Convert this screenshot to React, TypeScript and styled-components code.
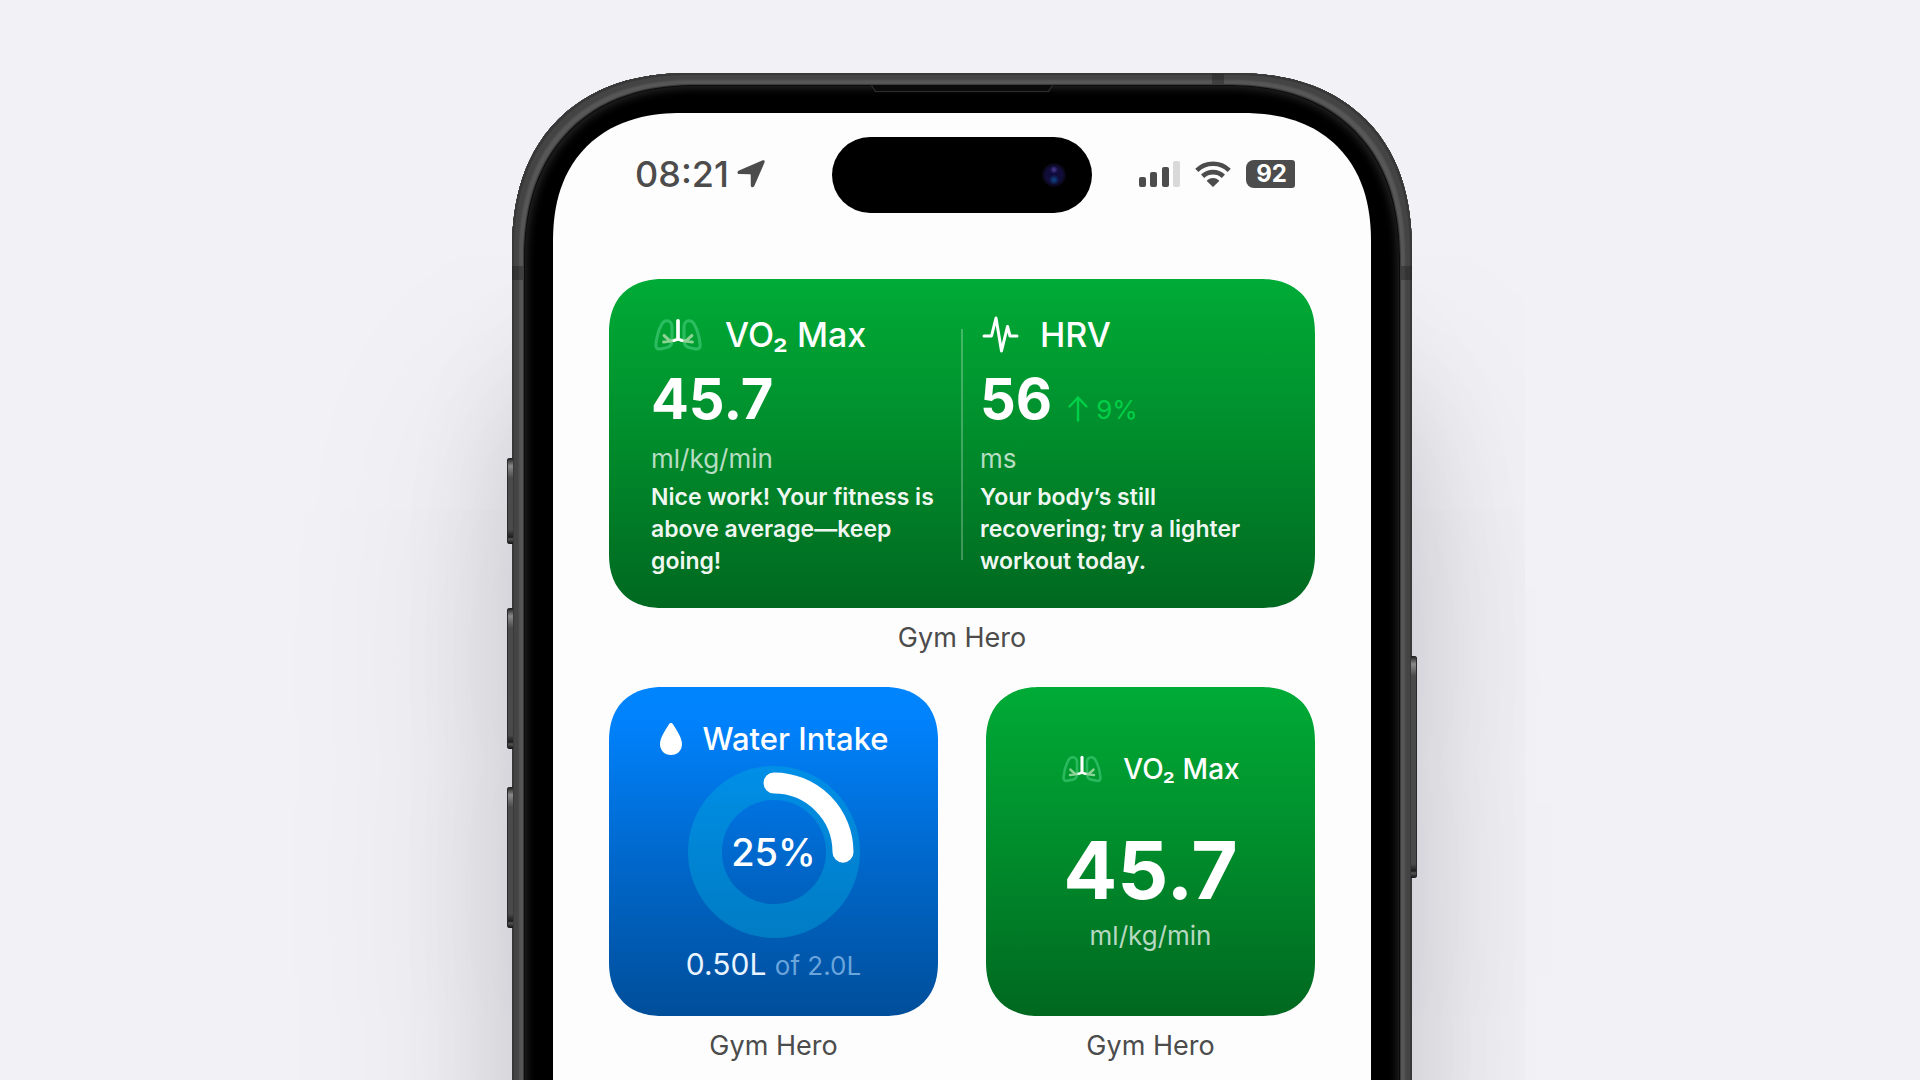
import React from "react";
import styled, { createGlobalStyle } from "styled-components";

const GlobalStyle = createGlobalStyle`
  * { box-sizing: border-box; }
  body {
    margin: 0;
    background: #f2f1f6;
    font-family: Inter, "Liberation Sans", sans-serif;
    -webkit-font-smoothing: antialiased;
  }
  h2, p, figure { margin: 0; }
`;

const Page = styled.main`
  height: 100vh;
  overflow: hidden;
  display: flex;
  justify-content: center;
  align-items: flex-start;
  padding: 73px 16px 0 20px;
`;

const Phone = styled.div`
  position: relative;
  width: 100%;
  max-width: 900px;
  padding: 40px 41px 0;
  border-radius: 178px 178px 0 0;
  corner-shape: superellipse(1.2);
  background: #000;
  box-shadow:
    inset 0 0 0 2px #383838,
    inset 0 0 2px 7px #444,
    inset 0 0 1px 11px #585858,
    inset 0 0 0 12px #3a3a3a,
    inset 0 0 0 13px #0c0c0c,
    inset 0 0 8px 15px #262626,
    0 290px 240px rgba(10, 8, 20, 0.14),
    0 250px 120px -10px rgba(10, 8, 20, 0.16);
`;

const Speaker = styled.span`
  position: absolute;
  top: 12px;
  left: 50%;
  width: 182px;
  height: 7px;
  transform: translateX(-50%);
  background: #2e2e2e;
  clip-path: polygon(0 0, 100% 0, calc(100% - 4px) 100%, 4px 100%);

  &::after {
    content: "";
    display: block;
    height: 6px;
    background: #0a0a0a;
    clip-path: polygon(1px 0, calc(100% - 1px) 0, calc(100% - 5px) 100%, 5px 100%);
  }
`;

const SideKey = styled.span<{ $side: "left" | "right"; $top: number; $length: number }>`
  position: absolute;
  top: ${(p) => p.$top}px;
  ${(p) => p.$side}: -5px;
  width: 6px;
  height: ${(p) => p.$length}px;
  border-radius: ${(p) => (p.$side === "left" ? "3px 0 0 3px" : "0 3px 3px 0")};
  background: linear-gradient(#1c1c1c, #8a8a8a 8px, #4a4a4a 20px, #4a4a4a calc(100% - 14px), #1c1c1c calc(100% - 7px), #555 calc(100% - 5px), #111);
  box-shadow: inset ${(p) => (p.$side === "left" ? "1px" : "-1px")} 0 0 #2a2a2a;
`;

const Antenna = styled.span<{ $edge: "left" | "right" | "top" }>`
  position: absolute;
  background: rgba(30, 30, 30, 0.4);
  ${(p) =>
    p.$edge === "top"
      ? "top: 1px; right: 188px; width: 12px; height: 10px;"
      : `top: 193px; ${p.$edge}: 0; width: 11px; height: 14px;`}
`;

const Screen = styled.div`
  border-radius: 129px 129px 0 0;
  corner-shape: superellipse(1.2);
  background: #fdfdfd;
  padding-bottom: 640px;
`;

const StatusBar = styled.header`
  display: grid;
  grid-template-columns: 1fr 260px 1fr;
  align-items: center;
  padding: 24px 76px 66px;
  color: #4c4c4c;
`;

const Clock = styled.div`
  display: flex;
  align-items: center;
  gap: 8px;
  padding: 0 0 2px 6px;
  font-size: 36px;
  line-height: 40px;
  font-weight: 500;
`;

const Island = styled.div`
  display: flex;
  align-items: center;
  justify-content: flex-end;
  height: 76px;
  padding-right: 26px;
  border-radius: 38px;
  background: #000;
`;

const Lens = styled.span`
  width: 24px;
  height: 24px;
  border-radius: 50%;
  background:
    radial-gradient(circle at 50% 28%, #4a3d94 0, transparent 4px),
    radial-gradient(circle at 50% 70%, #0b4a86 0, transparent 5px),
    radial-gradient(circle, #0d0a3c 0, #120d3a 8px, #07060f 12px);
`;

const Signals = styled.div`
  display: flex;
  align-items: center;
  justify-content: flex-end;
  gap: 15px;
  padding-bottom: 2px;
`;

const Battery = styled.span`
  width: 49px;
  padding-left: 2px;
  border-radius: 8px 3px 3px 8px;
  background: #4c4c4c;
  color: #fff;
  font-size: 24px;
  line-height: 28px;
  font-weight: 700;
  text-align: center;
`;

const Widgets = styled.div`
  display: grid;
  grid-template-columns: 1fr 1fr;
  gap: 33px 48px;
  padding: 0 56px;
`;

const Widget = styled.figure<{ $wide?: boolean }>`
  grid-column: ${(p) => (p.$wide ? "1 / -1" : "auto")};
  display: flex;
  flex-direction: column;
  gap: 14px;
`;

const WidgetName = styled.figcaption`
  color: #4c4c4c;
  font-size: 27px;
  line-height: 32px;
  text-align: center;
`;

const Card = styled.section<{ $tone: "green" | "blue" }>`
  display: flex;
  height: 329px;
  border-radius: 54px;
  corner-shape: superellipse(1.2);
  color: #fff;
  background: ${(p) =>
    p.$tone === "green"
      ? "linear-gradient(#00ab36, #008a2b 52%, #006820)"
      : "linear-gradient(#0085ff, #0082fc 10%, #0068cc 52%, #004e9a)"};
`;

const SplitCard = styled(Card)`
  display: grid;
  grid-template-columns: minmax(0, 1fr) 2px minmax(0, 1fr);
  padding: 32px 42px;
`;

const StackCard = styled(Card)`
  flex-direction: column;
  align-items: center;
`;

const Divider = styled.span`
  margin: 18px 0 17px;
  background: rgba(255, 255, 255, 0.25);
`;

const Metric = styled.div<{ $inset?: boolean }>`
  display: flex;
  flex-direction: column;
  padding-left: ${(p) => (p.$inset ? 17 : 0)}px;
`;

const Title = styled.h2<{ $size: number }>`
  display: flex;
  align-items: center;
  gap: 20px;
  font-size: ${(p) => p.$size}px;
  line-height: 48px;
  font-weight: 500;
  white-space: nowrap;
`;

const IconSlot = styled.span<{ $width: number }>`
  display: flex;
  justify-content: center;
  width: ${(p) => p.$width}px;
`;

const ValueRow = styled.div`
  display: flex;
  align-items: baseline;
  gap: 16px;
  margin: 12px 0 16px;
`;

const Value = styled.strong<{ $size: number }>`
  font-size: ${(p) => p.$size}px;
  line-height: 56px;
  font-weight: 700;
`;

const Trend = styled.span`
  color: #00cf48;
  font-size: 26px;
  line-height: 32px;

  svg {
    margin-right: 8px;
    vertical-align: -3px;
  }
`;

const Unit = styled.p`
  color: rgba(255, 255, 255, 0.72);
  font-size: 26px;
  line-height: 32px;
`;

const Advice = styled.p`
  padding-top: 6px;
  color: rgba(255, 255, 255, 0.95);
  font-size: 23px;
  line-height: 32px;
  font-weight: 600;
`;

const WaterCard = styled(StackCard)`
  padding-top: 28px;
`;

const VoCard = styled(StackCard)`
  padding-top: 58px;
`;

const BigValue = styled(Value)`
  margin-top: 45px;
  line-height: 64px;
`;

const SmallUnit = styled(Unit)`
  margin-top: 18px;
`;

const Gauge = styled.div`
  display: grid;
  place-items: center;
  margin-top: 3px;

  > * { grid-area: 1 / 1; }
`;

const Percent = styled.span`
  font-size: 38px;
  line-height: 48px;
  font-weight: 500;
`;

const Intake = styled.p`
  margin-top: 4px;
  font-size: 30px;
  line-height: 44px;
  color: #e8f4ff;
  white-space: nowrap;
`;

const Goal = styled.span`
  font-size: 26px;
  color: rgba(180, 220, 255, 0.6);
`;

function LungsIcon({ width }: { width: number }) {
  return (
    <svg width={width} height={(width * 36) / 52} viewBox="0 0 52 36" fill="none" strokeLinecap="round" strokeLinejoin="round" aria-hidden>
      <g stroke="#6be5a4" strokeOpacity=".4" strokeWidth="3.400">
        <path d="M14 3C17.500 3 19.500 6 19.500 10V25C19.500 29 18 31 14 32L7 33.500C3 34 1.800 32 2 29C2.800 21 5.500 12 8 7.500C9.500 4.500 11 3 14 3Z" />
        <path d="M38 3C34.500 3 32.500 6 32.500 10V25C32.500 29 34 31 38 32L45 33.500C49 34 50.200 32 50 29C49.200 21 46.500 12 44 7.500C42.500 4.500 41 3 38 3Z" />
      </g>
      <g stroke="#a3dca6" strokeOpacity=".85" strokeWidth="3.400">
        <path d="M24 23.500L18 25L10.500 26M17.500 25L11 19" />
        <path d="M28 23.500L34 25L41.500 26M34.500 25L41 19" />
      </g>
      <path d="M26 3V23" stroke="#fff" strokeWidth="4" />
      <path d="M21.500 24.600L26 22.700L30.500 24.600" stroke="#fff" strokeWidth="2.800" />
    </svg>
  );
}

function PulseIcon() {
  return (
    <svg width="38" height="40" viewBox="0 0 38 40" fill="none" stroke="#fff" strokeWidth="3" strokeLinecap="round" strokeLinejoin="round" aria-hidden>
      <path d="M3 21H10.500L15 3L20.500 36L26.500 11.500L29 21H36" />
    </svg>
  );
}

function DropIcon() {
  return (
    <svg width="22" height="32" viewBox="0 0 22 32" fill="#fff" aria-hidden>
      <path d="M11 0C12 0 12.700 .7 13.300 1.700C16.500 7 22 14.500 22 21C22 27.500 17.500 32 11 32S0 27.500 0 21C0 14.500 5.500 7 8.700 1.700C9.300 .7 10 0 11 0Z" />
    </svg>
  );
}

function LocationIcon() {
  return (
    <svg width="28" height="28" viewBox="0 0 28 28" fill="currentColor" aria-hidden>
      <path d="M25.200 .5C27.200 -.3 28.200 .9 27.400 2.800L17.400 25.800C16.400 28 13.800 27.600 13.800 25.200L13.700 14.800C13.700 14.400 13.500 14.200 13.100 14.200L2.600 14.100C.1 14.100-.3 11.500 2 10.500Z" />
    </svg>
  );
}

function CellularIcon() {
  return (
    <svg width="41" height="26" viewBox="0 0 41 26" fill="currentColor" aria-hidden>
      <rect y="16" width="7" height="10" rx="2" />
      <rect x="11" y="11" width="7" height="15" rx="2" />
      <rect x="23" y="6" width="7" height="20" rx="2" />
      <rect x="34" width="7" height="26" rx="2" opacity=".2" />
    </svg>
  );
}

function WifiIcon() {
  return (
    <svg width="36" height="26" viewBox="0 0 36 26" aria-hidden>
      <g fill="none" stroke="currentColor" strokeWidth="4.600">
        <path d="M1.800 9.300A23.500 23.500 0 0 1 34.200 9.300" />
        <path d="M7.600 15.200A15.200 15.200 0 0 1 28.400 15.200" />
      </g>
      <path d="M18 26L12 20.200Q11.600 19.700 12.200 19.200A9 9 0 0 1 23.800 19.200Q24.400 19.700 24 20.200Z" fill="currentColor" />
    </svg>
  );
}

function ArrowUpIcon() {
  return (
    <svg width="20" height="26" viewBox="0 0 20 26" fill="none" stroke="currentColor" strokeWidth="2.400" strokeLinecap="round" strokeLinejoin="round" aria-hidden>
      <path d="M10 24.500V1.500M1.500 10.500L10 1.500L18.500 10.500" />
    </svg>
  );
}

function Ring({ share }: { share: number }) {
  const radius = 69;
  const length = 2 * Math.PI * radius;
  return (
    <svg width="172" height="172" viewBox="0 0 172 172" fill="none" aria-hidden>
      <circle cx="86" cy="86" r={radius} stroke="#00b4e0" strokeOpacity=".38" strokeWidth="34" />
      <circle
        cx="86"
        cy="86"
        r={radius}
        stroke="#fff"
        strokeWidth="21"
        strokeLinecap="round"
        strokeDasharray={`${length * share} ${length}`}
        transform="rotate(-90 86 86)"
      />
    </svg>
  );
}

export default function App() {
  return (
    <>
      <GlobalStyle />
      <Page>
        <Phone>
          <SideKey $side="left" $top={385} $length={86} />
          <SideKey $side="left" $top={535} $length={141} />
          <SideKey $side="left" $top={714} $length={141} />
          <SideKey $side="right" $top={583} $length={222} />
          <Antenna $edge="left" />
          <Antenna $edge="right" />
          <Antenna $edge="top" />
          <Speaker />
          <Screen>
            <StatusBar>
              <Clock>
                08:21
                <LocationIcon />
              </Clock>
              <Island>
                <Lens />
              </Island>
              <Signals>
                <CellularIcon />
                <WifiIcon />
                <Battery>92</Battery>
              </Signals>
            </StatusBar>
            <Widgets>
              <Widget $wide>
                <SplitCard $tone="green">
                  <Metric>
                    <Title $size={34}>
                      <IconSlot $width={54}>
                        <LungsIcon width={48} />
                      </IconSlot>
                      VO₂ Max
                    </Title>
                    <ValueRow>
                      <Value $size={56}>45.7</Value>
                    </ValueRow>
                    <Unit>ml/kg/min</Unit>
                    <Advice>Nice work! Your fitness is above average—keep going!</Advice>
                  </Metric>
                  <Divider />
                  <Metric $inset>
                    <Title $size={34}>
                      <IconSlot $width={40}>
                        <PulseIcon />
                      </IconSlot>
                      HRV
                    </Title>
                    <ValueRow>
                      <Value $size={56}>56</Value>
                      <Trend>
                        <ArrowUpIcon />
                        9%
                      </Trend>
                    </ValueRow>
                    <Unit>ms</Unit>
                    <Advice>Your body’s still recovering; try a lighter workout today.</Advice>
                  </Metric>
                </SplitCard>
                <WidgetName>Gym Hero</WidgetName>
              </Widget>
              <Widget>
                <WaterCard $tone="blue">
                  <Title $size={31}>
                    <IconSlot $width={24}>
                      <DropIcon />
                    </IconSlot>
                    Water Intake
                  </Title>
                  <Gauge>
                    <Ring share={0.25} />
                    <Percent>25%</Percent>
                  </Gauge>
                  <Intake>
                    0.50L <Goal>of 2.0L</Goal>
                  </Intake>
                </WaterCard>
                <WidgetName>Gym Hero</WidgetName>
              </Widget>
              <Widget>
                <VoCard $tone="green">
                  <Title $size={28}>
                    <IconSlot $width={42}>
                      <LungsIcon width={40} />
                    </IconSlot>
                    VO₂ Max
                  </Title>
                  <BigValue $size={80}>45.7</BigValue>
                  <SmallUnit>ml/kg/min</SmallUnit>
                </VoCard>
                <WidgetName>Gym Hero</WidgetName>
              </Widget>
            </Widgets>
          </Screen>
        </Phone>
      </Page>
    </>
  );
}
